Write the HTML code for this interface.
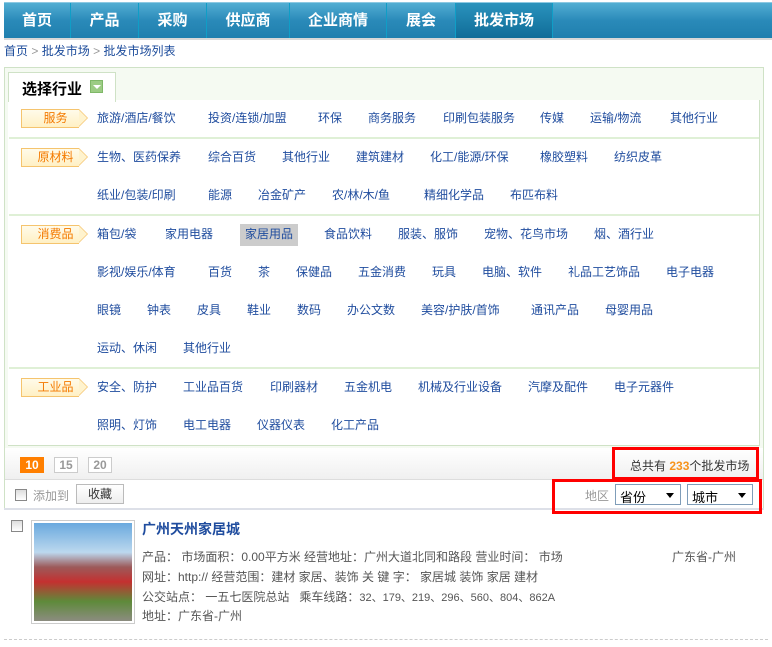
<!DOCTYPE html>
<html><head><meta charset="utf-8"><style>
*{margin:0;padding:0;box-sizing:border-box}
body{width:772px;height:647px;background:#fff;font-family:"Liberation Sans","Noto Sans CJK SC","WenQuanYi Zen Hei",sans-serif;font-size:12px;position:relative;overflow:hidden;color:#333}
.a{position:absolute;white-space:nowrap}
#nav{position:absolute;left:4px;top:2px;width:768px;height:36px;background:linear-gradient(#52aed3,#2a8ab9 50%,#1f7fae);border-top:1px solid #8cc9e2}
#navline{position:absolute;left:4px;top:38px;width:768px;height:2px;background:#d8d8d8}
.n{position:absolute;top:0;height:36px;line-height:36px;color:#fff;font-weight:bold;font-size:15px;text-align:center;border-right:1px solid #0f9ec7}
.n.act{background:linear-gradient(#2a93bd,#0f6b97)}
.bc{color:#1a4a9a}
.gt{color:#999}
#panel{position:absolute;left:4px;top:67px;width:760px;height:443px;border:1px solid #cfe2c6;background:#fff}
#strip{position:absolute;left:5px;top:68px;width:758px;height:380px;background:#f5faf2}
#tab{position:absolute;left:8px;top:72px;width:108px;height:30px;background:#fff;border:1px solid #cfe2c6;border-bottom:none;font-weight:bold;font-size:15px;color:#000;padding:5px 0 0 13px}
#tabicon{position:absolute;left:90px;top:80px;width:13px;height:13px;background:#9ccc84;border:1px solid #7fb868}
#tabicon:after{content:"";position:absolute;left:2px;top:4px;border:4px solid transparent;border-top:4px solid #fff}
#box{position:absolute;left:8px;top:100px;width:752px;height:346px;background:#fff;border-right:1px solid #cfe2c6;border-bottom:1px solid #cfe2c6}
.hr{position:absolute;left:9px;width:750px;height:2px;background:#dff0d6}
.l{position:absolute;color:#1f4c9e;white-space:nowrap;font-size:12px;line-height:14px}
.tag{position:absolute;left:21px;width:58px;height:19px;background:linear-gradient(#fffbea,#fff0c4);border:1px solid #f5c46e;border-right:none;color:#f47a00;text-align:center;line-height:17px;font-size:12px;padding-left:10px}
.tag:after{content:"";position:absolute;right:-9px;top:-1px;width:0;height:0;border-top:9px solid transparent;border-bottom:9px solid transparent;border-left:9px solid #f5c46e}
.tag:before{content:"";position:absolute;right:-8px;top:0px;width:0;height:0;border-top:8px solid transparent;border-bottom:8px solid transparent;border-left:8px solid #fff3ce;z-index:1}
#pager{position:absolute;left:5px;top:448px;width:758px;height:32px;background:linear-gradient(#fff,#f0f0f0);border-bottom:1px solid #ddd}
.pg{position:absolute;top:457px;height:16px;width:24px;border:1px solid #ccc;color:#999;font-weight:bold;text-align:center;line-height:14px;font-size:12px;background:#fff}
.sel{position:absolute;top:484px;height:21px;border:1px solid #7f9db9;background:#fff;font-size:13px;color:#000;padding:2px 4px}
.sel:after{content:"";position:absolute;right:6px;top:8px;border:4px solid transparent;border-top:5px solid #000}
.red{position:absolute;border:3px solid #f00}
.cb{position:absolute;width:12px;height:12px;border:1px solid #888;background:linear-gradient(#ddd,#fff)}
.t{position:absolute;color:#555;font-size:12px;white-space:nowrap}
</style></head><body>
<div id="nav">
<div class="n" style="left:0;width:67px">首页</div>
<div class="n" style="left:67px;width:68px">产品</div>
<div class="n" style="left:135px;width:68px">采购</div>
<div class="n" style="left:203px;width:83px">供应商</div>
<div class="n" style="left:286px;width:97px">企业商情</div>
<div class="n" style="left:383px;width:69px">展会</div>
<div class="n act" style="left:452px;width:97px">批发市场</div>
</div>
<div id="navline"></div>
<div class="a" style="left:4px;top:42px;font-size:12px"><span class="bc">首页</span> <span class="gt">&gt;</span> <span class="bc">批发市场</span> <span class="gt">&gt;</span> <span class="bc">批发市场列表</span></div>

<div id="panel"></div>
<div id="strip"></div>
<div id="box"></div>
<div id="tab">选择行业</div><div id="tabicon"></div>

<div class="tag" style="top:109px">服务</div>
<div class="l" style="left:97px;top:111px">旅游/酒店/餐饮</div>
<div class="l" style="left:208px;top:111px">投资/连锁/加盟</div>
<div class="l" style="left:318px;top:111px">环保</div>
<div class="l" style="left:368px;top:111px">商务服务</div>
<div class="l" style="left:443px;top:111px">印刷包装服务</div>
<div class="l" style="left:540px;top:111px">传媒</div>
<div class="l" style="left:590px;top:111px">运输/物流</div>
<div class="l" style="left:670px;top:111px">其他行业</div>
<div class="hr" style="top:137px"></div>

<div class="tag" style="top:148px">原材料</div>
<div class="l" style="left:97px;top:150px">生物、医药保养</div>
<div class="l" style="left:208px;top:150px">综合百货</div>
<div class="l" style="left:282px;top:150px">其他行业</div>
<div class="l" style="left:356px;top:150px">建筑建材</div>
<div class="l" style="left:430px;top:150px">化工/能源/环保</div>
<div class="l" style="left:540px;top:150px">橡胶塑料</div>
<div class="l" style="left:614px;top:150px">纺织皮革</div>
<div class="l" style="left:97px;top:188px">纸业/包装/印刷</div>
<div class="l" style="left:208px;top:188px">能源</div>
<div class="l" style="left:258px;top:188px">冶金矿产</div>
<div class="l" style="left:332px;top:188px">农/林/木/鱼</div>
<div class="l" style="left:424px;top:188px">精细化学品</div>
<div class="l" style="left:510px;top:188px">布匹布料</div>
<div class="hr" style="top:214px"></div>

<div class="tag" style="top:225px">消费品</div>
<div class="l" style="left:97px;top:227px">箱包/袋</div>
<div class="l" style="left:165px;top:227px">家用电器</div>
<div class="a" style="left:240px;top:224px;width:58px;height:22px;background:#ccc"></div>
<div class="l" style="left:245px;top:227px">家居用品</div>
<div class="l" style="left:324px;top:227px">食品饮料</div>
<div class="l" style="left:398px;top:227px">服装、服饰</div>
<div class="l" style="left:484px;top:227px">宠物、花鸟市场</div>
<div class="l" style="left:594px;top:227px">烟、酒行业</div>
<div class="l" style="left:97px;top:265px">影视/娱乐/体育</div>
<div class="l" style="left:208px;top:265px">百货</div>
<div class="l" style="left:258px;top:265px">茶</div>
<div class="l" style="left:296px;top:265px">保健品</div>
<div class="l" style="left:358px;top:265px">五金消费</div>
<div class="l" style="left:432px;top:265px">玩具</div>
<div class="l" style="left:482px;top:265px">电脑、软件</div>
<div class="l" style="left:568px;top:265px">礼品工艺饰品</div>
<div class="l" style="left:666px;top:265px">电子电器</div>
<div class="l" style="left:97px;top:303px">眼镜</div>
<div class="l" style="left:147px;top:303px">钟表</div>
<div class="l" style="left:197px;top:303px">皮具</div>
<div class="l" style="left:247px;top:303px">鞋业</div>
<div class="l" style="left:297px;top:303px">数码</div>
<div class="l" style="left:347px;top:303px">办公文数</div>
<div class="l" style="left:421px;top:303px">美容/护肤/首饰</div>
<div class="l" style="left:531px;top:303px">通讯产品</div>
<div class="l" style="left:605px;top:303px">母婴用品</div>
<div class="l" style="left:97px;top:341px">运动、休闲</div>
<div class="l" style="left:183px;top:341px">其他行业</div>
<div class="hr" style="top:367px"></div>

<div class="tag" style="top:378px">工业品</div>
<div class="l" style="left:97px;top:380px">安全、防护</div>
<div class="l" style="left:183px;top:380px">工业品百货</div>
<div class="l" style="left:270px;top:380px">印刷器材</div>
<div class="l" style="left:344px;top:380px">五金机电</div>
<div class="l" style="left:418px;top:380px">机械及行业设备</div>
<div class="l" style="left:528px;top:380px">汽摩及配件</div>
<div class="l" style="left:614px;top:380px">电子元器件</div>
<div class="l" style="left:97px;top:418px">照明、灯饰</div>
<div class="l" style="left:183px;top:418px">电工电器</div>
<div class="l" style="left:257px;top:418px">仪器仪表</div>
<div class="l" style="left:331px;top:418px">化工产品</div>

<div id="pager"></div>
<div class="pg" style="left:20px;background:#ff7f00;border-color:#ff7f00;color:#fff">10</div>
<div class="pg" style="left:54px">15</div>
<div class="pg" style="left:88px">20</div>
<div class="a" style="left:630px;top:457px;font-size:12px;color:#333">总共有 <b style="color:#f7941d">233</b>个批发市场</div>
<div class="red" style="left:612px;top:447px;width:147px;height:33px"></div>
<div class="a" style="left:4px;top:508px;width:760px;height:2px;background:#dde0e8"></div>
<div class="cb" style="left:15px;top:489px"></div>
<div class="a" style="left:33px;top:487px;color:#999">添加到</div>
<div class="a" style="left:76px;top:484px;width:48px;height:20px;border:1px solid #bbb;background:linear-gradient(#fff,#eee);text-align:center;line-height:18px;color:#333">收藏</div>
<div class="a" style="left:585px;top:487px;color:#999">地区</div>
<div class="sel" style="left:615px;width:66px">省份</div>
<div class="sel" style="left:687px;width:66px">城市</div>
<div class="red" style="left:552px;top:479px;width:210px;height:35px"></div>

<div class="cb" style="left:11px;top:520px"></div>
<div class="a" style="left:31px;top:520px;width:104px;height:104px;border:1px solid #ccc;padding:2px;background:#fff"><div style="width:98px;height:98px;background:linear-gradient(#6aa9de 0%,#bcd8ee 30%,#9c5a5a 45%,#c43030 60%,#5e8a3a 80%,#8c8c80 100%)"></div></div>
<div class="a" style="left:142px;top:519px;color:#1f4c9e;font-weight:bold;font-size:14px">广州天州家居城</div>
<div class="t" style="left:142px;top:548px">产品： 市场面积：0.00平方米 经营地址：广州大道北同和路段 营业时间： 市场</div>
<div class="t" style="left:672px;top:548px">广东省-广州</div>
<div class="t" style="left:142px;top:568px">网址：http:// 经营范围：建材 家居、装饰 关 键 字： 家居城 装饰 家居 建材</div>
<div class="t" style="left:142px;top:588px">公交站点： 一五七医院总站 &nbsp; 乘车线路：<span style="font-size:11px">32、179、219、296、560、804、862A</span></div>
<div class="t" style="left:142px;top:607px">地址：广东省-广州</div>
<div class="a" style="left:4px;top:639px;width:764px;border-top:1px dashed #ccc"></div>
</body></html>
